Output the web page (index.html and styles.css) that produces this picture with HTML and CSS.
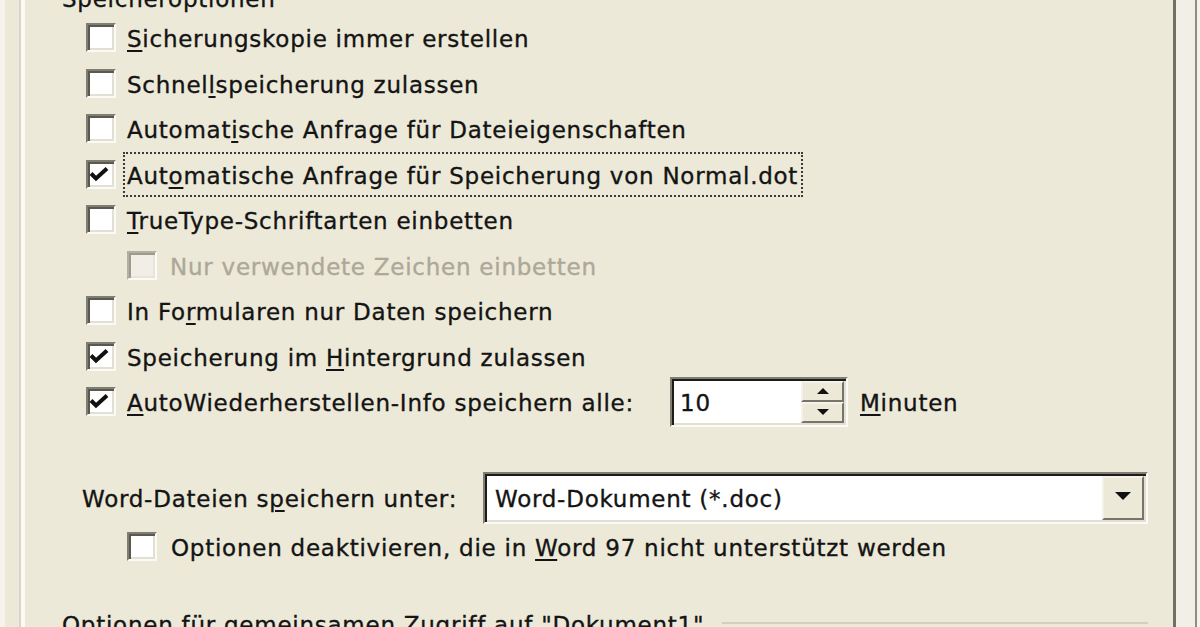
FILE: index.html
```html
<!DOCTYPE html>
<html lang="de">
<head>
<meta charset="utf-8">
<title>Optionen – Speichern</title>
<link rel="stylesheet" href="styles.css">
</head>
<body>
<div class="window">
  <div class="edge-left"></div>
  <main class="page">
    <section class="group">
      <div class="group-title">Speicheroptionen</div>
      <div class="opts">
        <div class="opt"><span class="box"></span><span class="lbl"><u>S</u>icherungskopie immer erstellen</span></div>
        <div class="opt"><span class="box"></span><span class="lbl">Schnel<u>l</u>speicherung zulassen</span></div>
        <div class="opt"><span class="box"></span><span class="lbl">Automat<u>i</u>sche Anfrage für Dateieigenschaften</span></div>
        <div class="opt"><span class="box"><svg class="check" viewBox="0 0 20 15"><path d="M2 6.5 L7 11.5 L18 1.5"/></svg></span><span class="lbl focus">Aut<u>o</u>matische Anfrage für Speicherung von Normal.dot</span></div>
        <div class="opt"><span class="box"></span><span class="lbl"><u>T</u>rueType-Schriftarten einbetten</span></div>
        <div class="opt sub disabled"><span class="box"></span><span class="lbl">Nur verwendete Zeichen einbetten</span></div>
        <div class="opt"><span class="box"></span><span class="lbl">In Fo<u>r</u>mularen nur Daten speichern</span></div>
        <div class="opt"><span class="box"><svg class="check" viewBox="0 0 20 15"><path d="M2 6.5 L7 11.5 L18 1.5"/></svg></span><span class="lbl">Speicherung im <u>H</u>intergrund zulassen</span></div>
        <div class="opt"><span class="box"><svg class="check" viewBox="0 0 20 15"><path d="M2 6.5 L7 11.5 L18 1.5"/></svg></span><span class="lbl spin-lbl"><u>A</u>utoWiederherstellen-Info speichern alle:</span>
          <div class="spin">
            <span class="field-val">10</span>
            <div class="spin-btns">
              <span class="spin-btn"><span class="tri-up"></span></span>
              <span class="spin-btn"><span class="tri-down"></span></span>
            </div>
          </div>
          <span class="lbl units"><u>M</u>inuten</span>
        </div>
      </div>
      <div class="format">
        <span class="format-lbl">Word-Dateien s<u>p</u>eichern unter:</span>
        <div class="combo">
          <span class="field-val">Word-Dokument (*.doc)</span>
          <span class="combo-btn"><span class="tri-down big"></span></span>
        </div>
      </div>
      <div class="opt legacy"><span class="box"></span><span class="lbl">Optionen deaktivieren, die in <u>W</u>ord 97 nicht unterstützt werden</span></div>
    </section>
    <section class="group2">
      <span class="group2-title">Optionen für gemeinsamen Zugriff auf "Dokument1"</span>
      <span class="rule"></span>
    </section>
  </main>
  <div class="edge-right"></div>
</div>
</body>
</html>
```

FILE: styles.css
```css
* { box-sizing: border-box; }
html, body { margin: 0; padding: 0; }
body {
  width: 1200px;
  height: 627px;
  overflow: hidden;
  background: #ECE9D8;
  font-family: "DejaVu Sans", "Noto Sans", sans-serif;
  font-size: 23px;
  letter-spacing: 0.75px;
  color: #141414;
  -webkit-text-stroke: 0.35px #141414;
}
u {
  text-decoration-thickness: 2px;
  text-underline-offset: 3px;
}
.window {
  display: flex;
  height: 627px;
}
.edge-left {
  flex: none;
  width: 26px;
  background: linear-gradient(90deg, #f5f3eb 0 5px, #ece9d8 5px 19px, #d9d6c8 19px 21px, #fbfaf5 21px 25px, #ece9d8 25px);
}
.edge-right {
  flex: none;
  width: 27px;
  background: linear-gradient(90deg, #707064 0 3px, #f2f0e6 3px 22px, #8f8d81 22px 24px, #f5f3ec 24px);
}
.page {
  flex: 1;
  min-width: 0;
}
.group-title {
  height: 26px;
  line-height: 26px;
  margin-top: -14px;
  padding-left: 36px;
  white-space: nowrap;
}
.opts {
  margin-top: 3px;
  padding-left: 60px;
}
.opt {
  height: 45.5px;
  display: flex;
  align-items: center;
  white-space: nowrap;
}
.box {
  flex: none;
  width: 30px;
  height: 29px;
  margin-right: 11px;
  background: #fff;
  border: 2px solid;
  border-color: #807e73 #fbfaf6 #fbfaf6 #807e73;
  box-shadow: inset 2px 2px 0 #5a584f, inset -2px -2px 0 #e2dfd3;
  display: flex;
  align-items: center;
  padding-left: 1px;
}
.check {
  width: 20px;
  height: 15px;
  fill: none;
  stroke: #111;
  stroke-width: 4;
}
.lbl {
  line-height: 26px;
  padding-top: 3px;
}
.focus {
  border: 2px dotted #3a3a3a;
  padding: 9px 3px 6px 2px;
  margin: -9px -5px -9px -4px;
}
.opt.sub { padding-left: 41px; }
.opt.sub .box { margin-right: 13px; }
.disabled { color: #aca899; -webkit-text-stroke: 0.35px #aca899; }
.disabled .box {
  background: #f1efe5;
  border-color: #b3b0a2 #fbfaf6 #fbfaf6 #b3b0a2;
  box-shadow: inset 2px 2px 0 #9e9b8d, inset -2px -2px 0 #e7e4d8;
}
.spin-lbl { flex: 0 0 543px; }
.spin {
  flex: none;
  width: 178px;
  height: 50px;
  display: flex;
  align-items: stretch;
  background: #fff;
  border: 2px solid;
  border-color: #807e73 #fbfaf6 #fbfaf6 #807e73;
  box-shadow: inset 2px 2px 0 #1c1c18, inset -2px -2px 0 #e2dfd3;
  padding: 2px;
}
.field-val {
  flex: 1;
  display: flex;
  align-items: center;
  padding-left: 6px;
  padding-top: 2px;
}
.spin-btns {
  flex: none;
  width: 43px;
  display: flex;
  flex-direction: column;
}
.spin-btn {
  flex: 1;
  display: flex;
  align-items: center;
  justify-content: center;
  background: #ECE9D8;
  border: 2px solid;
  border-color: #f4f2ea #77756a #77756a #f4f2ea;
}
.tri-up, .tri-down {
  width: 0;
  height: 0;
  border-left: 6px solid transparent;
  border-right: 6px solid transparent;
  -webkit-text-stroke: 0;
}
.tri-up { border-bottom: 6px solid #111; }
.tri-down { border-top: 6px solid #111; }
.tri-down.big {
  border-left-width: 8px;
  border-right-width: 8px;
  border-top-width: 8px;
  margin-top: -4px;
}
.units { margin-left: 12px; }
.format {
  margin-top: 47.5px;
  height: 52px;
  display: flex;
  align-items: center;
  padding-left: 56px;
  white-space: nowrap;
}
.format-lbl {
  flex: 0 0 401px;
  padding-top: 2px;
}
.combo {
  flex: none;
  width: 665px;
  height: 52px;
  display: flex;
  background: #fff;
  border: 2px solid;
  border-color: #807e73 #fbfaf6 #fbfaf6 #807e73;
  box-shadow: inset 2px 2px 0 #1c1c18, inset -2px -2px 0 #e2dfd3;
  padding: 2px;
}
.combo .field-val { padding-left: 8px; }
.combo-btn {
  flex: none;
  width: 42px;
  display: flex;
  align-items: center;
  justify-content: center;
  background: #ECE9D8;
  border: 2px solid;
  border-color: #f4f2ea #77756a #77756a #f4f2ea;
}
.opt.legacy { padding-left: 101px; }
.opt.legacy .box { margin-right: 14px; }
.group2 {
  margin-top: 40.5px;
  height: 26px;
  display: flex;
  align-items: center;
  padding-left: 36px;
  white-space: nowrap;
}
.group2-title {
  line-height: 26px;
  padding-top: 3px;
}
.rule {
  flex: 1;
  height: 2px;
  background: #d3d0c2;
  margin-left: 18px;
  margin-right: 25px;
}
```
